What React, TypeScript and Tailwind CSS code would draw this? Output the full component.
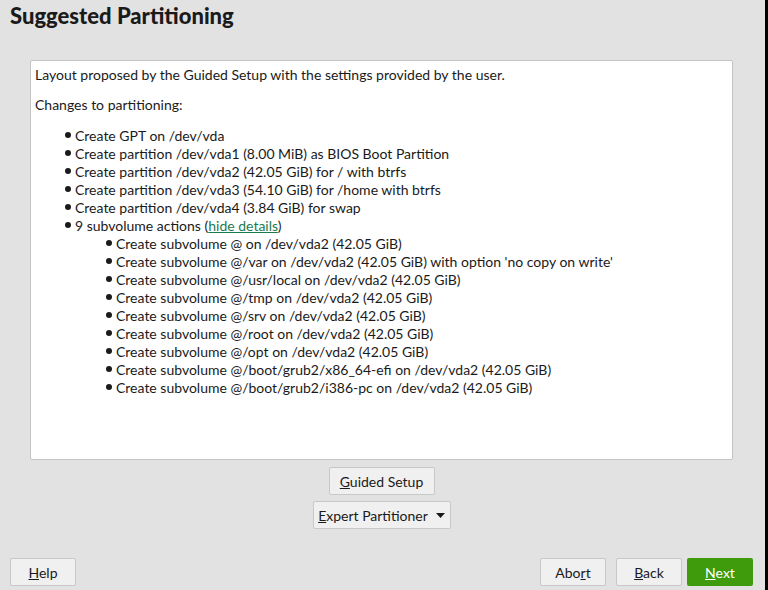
const subs = [
  "Create subvolume @ on /dev/vda2 (42.05 GiB)",
  "Create subvolume @/var on /dev/vda2 (42.05 GiB) with option 'no copy on write'",
  "Create subvolume @/usr/local on /dev/vda2 (42.05 GiB)",
  "Create subvolume @/tmp on /dev/vda2 (42.05 GiB)",
  "Create subvolume @/srv on /dev/vda2 (42.05 GiB)",
  "Create subvolume @/root on /dev/vda2 (42.05 GiB)",
  "Create subvolume @/opt on /dev/vda2 (42.05 GiB)",
  "Create subvolume @/boot/grub2/x86_64-efi on /dev/vda2 (42.05 GiB)",
  "Create subvolume @/boot/grub2/i386-pc on /dev/vda2 (42.05 GiB)",
];

const tops = [
  "Create GPT on /dev/vda",
  "Create partition /dev/vda1 (8.00 MiB) as BIOS Boot Partition",
  "Create partition /dev/vda2 (42.05 GiB) for / with btrfs",
  "Create partition /dev/vda3 (54.10 GiB) for /home with btrfs",
  "Create partition /dev/vda4 (3.84 GiB) for swap",
];

function Bullet({ children }: { children: React.ReactNode }) {
  return (
    <li className="flex items-center h-[18px]">
      <span className="w-[6px] h-[6px] rounded-full bg-[#1a1a1a] mr-[4px] shrink-0" />
      <span>{children}</span>
    </li>
  );
}

function Btn({ children, className = "" }: { children: React.ReactNode; className?: string }) {
  return (
    <button className={`h-[28px] rounded-[2px] border border-[#c8c8c8] bg-[#f0f0f0] text-[14px] text-[#1a1a1a] ${className}`}>
      {children}
    </button>
  );
}

export default function App() {
  return (
    <div
      className="w-[768px] h-[590px] bg-[#e2e2e2] flex text-[#1a1a1a]"
      style={{ fontFamily: "Lato, 'Noto Sans', sans-serif" }}
    >
      <div className="flex-1 flex flex-col">
        <h1 className="h-[32px] pl-[10px] pt-[2px] text-[22px] font-black leading-[28px] text-[#1a1a1a]">
          Suggested Partitioning
        </h1>
        <div className="mt-[28px] ml-[30px] w-[703px] h-[400px] bg-white border border-[#c4c4c4] rounded-[2px] px-[4px] pt-[5px] text-[14px]">
          <p className="h-[18px] leading-[18px]">Layout proposed by the Guided Setup with the settings provided by the user.</p>
          <p className="mt-[12px] h-[18px] leading-[18px]">Changes to partitioning:</p>
          <ul className="mt-[12px] pl-[30px]">
            {tops.map((t) => (
              <Bullet key={t}>{t}</Bullet>
            ))}
            <Bullet>
              9 subvolume actions (<span className="text-[#1b7a4f] underline">hide details</span>)
            </Bullet>
            <li>
              <ul className="pl-[41px]">
                {subs.map((s) => (
                  <Bullet key={s}>{s}</Bullet>
                ))}
              </ul>
            </li>
          </ul>
        </div>
        <div className="flex flex-col items-center mt-[7px] ml-[30px] w-[703px] gap-[6px]">
          <Btn className="w-[106px]"><u>G</u>uided Setup</Btn>
          <Btn className="w-[138px] flex items-center justify-center gap-[8px]">
            <span><u>E</u>xpert Partitioner</span>
            <svg width="9" height="5" viewBox="0 0 9 5"><path d="M0 0h9L4.5 5z" fill="#1a1a1a" /></svg>
          </Btn>
        </div>
        <div className="flex items-center mt-[29px] pl-[10px] pr-[12px]">
          <Btn className="w-[66px]"><u>H</u>elp</Btn>
          <div className="flex-1" />
          <Btn className="w-[66px]">Abo<u>r</u>t</Btn>
          <Btn className="w-[66px] ml-[10px]"><u>B</u>ack</Btn>
          <button className="w-[66px] h-[28px] ml-[5px] rounded-[2px] bg-[#3f9b0b] text-white text-[14px]"><u>N</u>ext</button>
        </div>
      </div>
      <div className="w-[3px] bg-black" />
    </div>
  );
}
